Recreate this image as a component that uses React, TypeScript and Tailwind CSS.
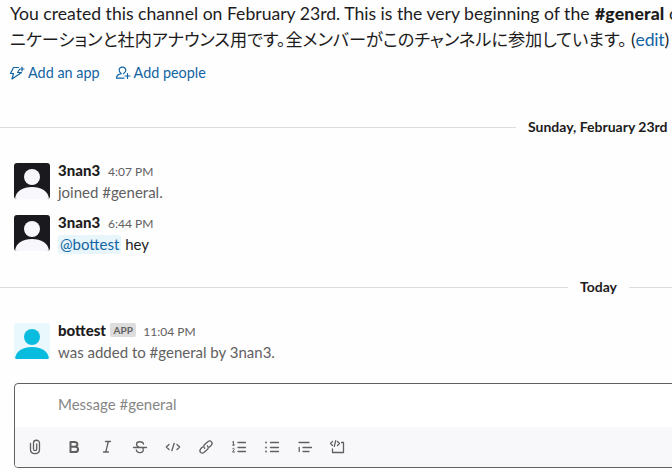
import type { ReactNode } from "react";

function Avatar({ bg, fg }: { bg: string; fg: string }) {
  return (
    <svg viewBox="0 0 36 36" className="mt-px h-9 w-9 shrink-0 rounded-[3px]">
      <rect width="36" height="36" fill={bg} />
      <circle cx="18" cy="14" r="8" fill={fg} />
      <path d="M1 36C1.500 28 9 24 18 24S34.500 28 35 36Z" fill={fg} />
    </svg>
  );
}

function Message({ name, time, app, bg, fg, children }: { name: string; time: string; app?: boolean; bg: string; fg: string; children: ReactNode }) {
  return (
    <div className="flex h-[52px] pl-[14px]">
      <Avatar bg={bg} fg={fg} />
      <div className="-mt-px ml-2 text-[15px] leading-[22px]">
        <div className="flex h-[20px] items-baseline whitespace-nowrap leading-[18px]">
          <span className="font-black">{name}</span>
          {app && <span className="-mr-px ml-1 mt-[2px] h-[14px] self-start rounded-[2px] bg-[#dddddd] px-[3.500px] text-[10px] font-bold leading-[14px] text-[#616061]">APP</span>}
          <span className="ml-2 text-[12px] text-[#616061]">{time}</span>
        </div>
        <div className="whitespace-nowrap">{children}</div>
      </div>
    </div>
  );
}

function Tool({ children }: { children: ReactNode }) {
  return (
    <svg viewBox="0 0 18 18" className="h-[18px] w-[18px] shrink-0" fill="none" stroke="#616061" strokeWidth="1.3" strokeLinecap="round" strokeLinejoin="round">
      {children}
    </svg>
  );
}

export default function App() {
  return (
    <div className="flex h-[473px] w-[672px] flex-col overflow-hidden bg-[#fefefe] font-['Lato','Noto_Sans_CJK_JP',sans-serif] text-[#1d1c1d]">
      <div className="h-[62px] shrink-0 whitespace-nowrap pl-[10px] text-[17.6px]">
        <div className="h-[27px] leading-[28px]">
          You created this channel on February 23rd. This is the very beginning of the <b className="ml-px font-black tracking-[0.15px]">#general</b> channel.
        </div>
        <div className="h-[26px] leading-[26px] [font-feature-settings:'palt']">
          <span className="text-[17.2px]">ニケーションと社内アナウンス用です。全メンバーがこのチャンネルに参加しています。</span> <span className="tracking-[-0.2px]">(<span className="text-[#1264a3]">edit</span>)</span>
        </div>
      </div>

      <div className="flex h-[22px] shrink-0 items-center pl-[9px] text-[14.4px] leading-[22px] text-[#1264a3]">
        <svg width="16" height="16" viewBox="0 0 16 16" className="mr-[3px]" fill="none" stroke="currentColor" strokeWidth="1.2" strokeLinejoin="round" strokeLinecap="round">
          <path d="M9.500 2.500H4.500L1.500 8.500H4.500L3 14L12.500 7.500H8.500L10.500 4.500M13 2V6M11 4H15" />
        </svg>
        <span>Add an app</span>
        <svg width="16" height="16" viewBox="0 0 16 16" className="ml-[15px] mr-[3px]" fill="none" stroke="currentColor" strokeWidth="1.2" strokeLinejoin="round" strokeLinecap="round">
          <path d="M8.500 8.700C10.200 7.600 10.800 6.400 10.800 5.200C10.800 3.300 9.300 2.200 7.500 2.200S4.200 3.300 4.200 5.200C4.200 6.500 5 7.800 6.300 8.700C3.500 9.300 1.500 10.500 1.500 13.200H9M12.500 8.500V13.500M10 11H15" />
        </svg>
        <span>Add people</span>
      </div>

      <div className="mt-[33px] flex h-[20px] shrink-0 items-center text-[14px] font-bold leading-[20px]">
        <div className="h-px w-[516px] shrink-0 bg-[#dddddd]" />
        <span className="ml-3 whitespace-nowrap">Sunday, February 23rd</span>
      </div>

      <div className="mt-[25px] h-[104px] shrink-0">
        <Message name="3nan3" time="4:07 PM" bg="#1a191d" fg="#f8f8fc">
          <span className="text-[#616061]">joined #general.</span>
        </Message>
        <Message name="3nan3" time="6:44 PM" bg="#1a191d" fg="#f8f8fc">
          <span className="rounded-[3px] bg-[#e8f5fa] px-[2px] pb-px text-[#1264a3]">@bottest</span> hey
        </Message>
      </div>

      <div className="mt-[11px] flex h-[20px] shrink-0 items-center text-[14px] font-bold leading-[20px]">
        <div className="h-px w-[568px] bg-[#dddddd]" />
        <span className="mx-3">Today</span>
        <div className="h-px flex-1 bg-[#dddddd]" />
      </div>

      <div className="mt-[25px] h-[61px] shrink-0">
        <Message name="bottest" time="11:04 PM" app bg="#e8f8fd" fg="#08bce0">
          <span className="text-[#616061]">was added to #general by 3nan3.</span>
        </Message>
      </div>

      <div className="ml-[14px] h-[85px] w-[680px] shrink-0 overflow-hidden rounded-[4px] border border-[#616061] bg-white">
        <div className="h-[43px] pl-[43px] text-[15px] leading-[41px] text-[#868686]">Message #general</div>
        <div className="flex h-[40px] items-center gap-[15px] bg-[#f8f8fa] pl-[11px]">
          <div className="mr-[6px] flex"><Tool><path d="M4.500 5.500V11.500C4.500 17 13.500 17 13.500 11.500V5C13.500 1.300 7.500 1.300 7.500 5V11C7.500 13.200 10.700 13.200 10.700 11V6" /></Tool></div>
          <Tool><path strokeWidth="2" d="M5.500 4H9.500C13.500 4 13.300 8.700 9.500 8.700H5.500ZM5.500 8.700H10C14.300 8.700 14 14 10 14H5.500Z" /></Tool>
          <Tool><path d="M7.500 3.500H12.500M5.500 14H10.500M10.300 3.500L7.800 14" /></Tool>
          <Tool><path d="M2.500 9.500H15.500M12.500 6C12 3 5.500 2.900 5.500 6.200C5.500 8.200 7.500 9 9 9.500M12 10.500C14 15.500 6 15.800 5.300 12" /></Tool>
          <Tool><path d="M5 6.500L2.300 9L5 11.500M13 6.500L15.700 9L13 11.500M10.200 5.300L7.800 12.700" /></Tool>
          <Tool><path d="M7.700 10.300C6.200 9 6.600 7.600 7.700 6.500L10.800 3.700C13.500 1.500 16.500 4.600 14.300 7.200L12.500 9M10.300 7.700C11.800 9 11.400 10.400 10.300 11.500L7.200 14.300C4.500 16.500 1.500 13.400 3.700 10.800L5.500 9" /></Tool>
          <Tool><path d="M8 4.500H15.500M8 9.500H15.500M8 13.500H15.500" /><path strokeWidth="1" d="M2.500 4L3.500 3.500V7M2.500 7H4.500M2.500 10.800C3.500 9.700 4.500 10.500 4.300 11.400L2.500 14H4.600" /></Tool>
          <Tool><path d="M7.500 4.500H15.500M7.500 9.500H15.500M7.500 13.500H15.500" /><path strokeWidth="1.800" d="M3 4.500H3.010M3 9.500H3.010M3 13.500H3.010" /></Tool>
          <Tool><path d="M3 4.500H13M7 9.500H15.500M7 13.500H13M3.200 9.500V13.500" /></Tool>
          <Tool><path d="M3.500 3.500L1.500 5.500L3.500 7.500M8.500 3.500L10.500 5.500L8.500 7.500M6.700 2.700L5.300 8.300M12.500 4.500H14.500V14.500H3.500V11" /></Tool>
        </div>
      </div>
    </div>
  );
}
